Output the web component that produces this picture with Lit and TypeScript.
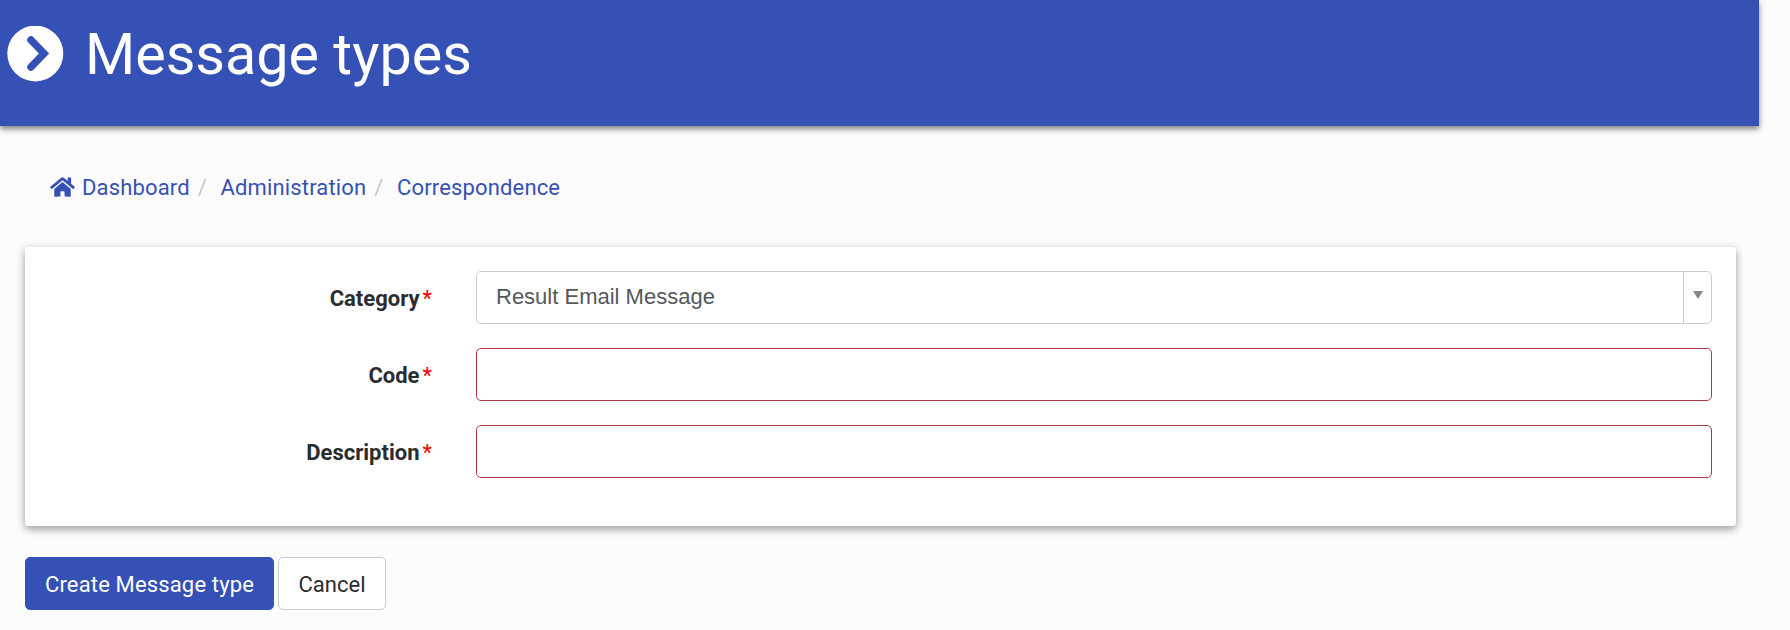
import { LitElement, html, css } from 'lit';
import { customElement } from 'lit/decorators.js';

const BLUE = '#3551b5';

@customElement('app-root')
export class AppRoot extends LitElement {
  static styles = css`
    :host {
      display: block;
      width: 1790px;
      height: 630px;
      overflow: hidden;
      background: #fcfcfc;
      font-family: Roboto, sans-serif;
      color: #2a2d30;
    }
    .page {
      width: 1759px;
    }
    .header {
      height: 126px;
      box-sizing: border-box;
      background: #3551b5;
      box-shadow: 0 3px 6px rgba(0, 0, 0, 0.5);
      display: flex;
      align-items: center;
      padding: 0 0 17px 7px;
      color: #fff;
    }
    .header svg {
      width: 57px;
      height: 57px;
      margin-right: 21px;
      flex: none;
    }
    h1 {
      margin: 0;
      padding-top: 1px;
      font-size: 57.5px;
      font-weight: 400;
      line-height: 66px;
    }
    .crumbs {
      display: flex;
      align-items: center;
      height: 30px;
      margin: 46px 0 0 50px;
      font-size: 22px;
      letter-spacing: 0.15px;
      color: #3551b5;
    }
    .crumbs svg {
      width: 25px;
      height: 22px;
      margin-right: 7px;
    }
    .crumbs .sep {
      color: #c4c8cc;
      margin: 0 13.5px 0 8px;
    }
    .card {
      margin: 45px 23px 0 25px;
      height: 279px;
      box-sizing: border-box;
      background: #fff;
      border-radius: 3px;
      box-shadow: 0 3px 8px rgba(0, 0, 0, 0.4);
      padding: 24px 24px 0 0;
      display: grid;
      grid-template-columns: 407px 1fr;
      grid-auto-rows: 53px;
      column-gap: 44px;
      row-gap: 24px;
    }
    label {
      text-align: right;
      font-size: 22px;
      font-weight: 700;
      line-height: 56px;
    }
    label span {
      color: #f00;
      font-weight: 400;
      margin-left: 3px;
    }
    .select,
    .input {
      box-sizing: border-box;
      border-radius: 5px;
      background: #fff;
    }
    .select {
      border: 1px solid #ccc;
      display: flex;
      align-items: stretch;
      font-family: 'Liberation Sans', Arial, sans-serif;
      font-size: 22px;
      color: #55585c;
    }
    .select .value {
      flex: 1;
      padding: 0 19px;
      line-height: 49px;
    }
    .select .arrow {
      width: 28px;
      border-left: 1px solid #ccc;
      display: flex;
      justify-content: center;
      padding-top: 19px;
      box-sizing: border-box;
    }
    .select .arrow i {
      width: 0;
      height: 0;
      border-left: 5px solid transparent;
      border-right: 5px solid transparent;
      border-top: 8px solid #888;
    }
    .input {
      border: 1px solid #b23a48;
    }
    .actions {
      display: flex;
      gap: 4px;
      margin: 31px 0 0 25px;
    }
    .btn {
      box-sizing: border-box;
      height: 53px;
      border-radius: 5px;
      font-family: Roboto, sans-serif;
      font-size: 22px;
      line-height: 53px;
      padding: 0 19.5px;
      border: 1px solid #ccc;
      background: #fff;
      color: #2a2d30;
    }
    .btn.primary {
      background: #3551b5;
      border-color: #3551b5;
      color: #fff;
      letter-spacing: 0.15px;
      padding: 0 19px;
    }
  `;

  render() {
    return html`
      <div class="page">
        <div class="header">
          <svg viewBox="0 0 57 57">
            <circle cx="28.3" cy="27.5" r="28" fill="#fff"></circle>
            <path d="M24 14 L37 27.5 L24 41" fill="none" stroke="${BLUE}" stroke-width="7.5" stroke-linecap="round" stroke-linejoin="miter"></path>
          </svg>
          <h1>Message types</h1>
        </div>
        <div class="crumbs">
          <svg viewBox="0 0 576 512" fill="currentColor">
            <path d="M280.37 148.26L96 300.11V464a16 16 0 0 0 16 16l112.06-.29a16 16 0 0 0 15.92-16V368a16 16 0 0 1 16-16h64a16 16 0 0 1 16 16v95.64a16 16 0 0 0 16 16.05L464 480a16 16 0 0 0 16-16V300L295.67 148.26a12.19 12.19 0 0 0-15.3 0zM571.6 251.47L488 182.56V44.05a12 12 0 0 0-12-12h-56a12 12 0 0 0-12 12v72.61L318.47 43a48 48 0 0 0-61 0L4.34 251.47a12 12 0 0 0-1.6 16.9l25.5 31A12 12 0 0 0 45.15 301l235.22-193.74a12.19 12.19 0 0 1 15.3 0L530.9 301a12 12 0 0 0 16.9-1.6l25.5-31a12 12 0 0 0-1.7-16.93z"></path>
          </svg>
          <span>Dashboard</span><span class="sep">/</span>
          <span>Administration</span><span class="sep">/</span>
          <span>Correspondence</span>
        </div>
        <div class="card">
          <label>Category<span>*</span></label>
          <div class="select">
            <div class="value">Result Email Message</div>
            <div class="arrow"><i></i></div>
          </div>
          <label>Code<span>*</span></label>
          <div class="input"></div>
          <label>Description<span>*</span></label>
          <div class="input"></div>
        </div>
        <div class="actions">
          <div class="btn primary">Create Message type</div>
          <div class="btn">Cancel</div>
        </div>
      </div>
    `;
  }
}
